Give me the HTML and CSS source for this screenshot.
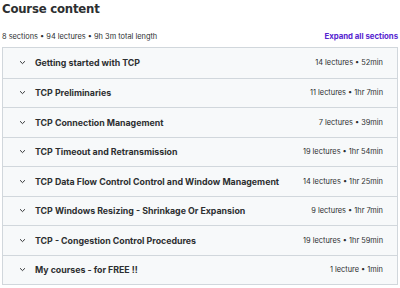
FILE: index.html
```html
<!DOCTYPE html>
<html>
<head>
<meta charset="utf-8">
<link rel="stylesheet" href="styles.css">
</head>
<body>
<div class="page">
  <h2 class="title">Course content</h2>
  <div class="meta">
    <span class="stats">8 sections • 94 lectures • 9h 3m total length</span>
    <span class="expand">Expand all sections</span>
  </div>
  <div class="list">
    <div class="row"><svg class="chev" viewBox="0 0 10 6"><path d="M1.5 1.2 L5 4.6 L8.5 1.2" /></svg><span class="name">Getting started with TCP</span><span class="info">14 lectures • 52min</span></div>
    <div class="row"><svg class="chev" viewBox="0 0 10 6"><path d="M1.5 1.2 L5 4.6 L8.5 1.2" /></svg><span class="name">TCP Preliminaries</span><span class="info">11 lectures • 1hr 7min</span></div>
    <div class="row"><svg class="chev" viewBox="0 0 10 6"><path d="M1.5 1.2 L5 4.6 L8.5 1.2" /></svg><span class="name">TCP Connection Management</span><span class="info">7 lectures • 39min</span></div>
    <div class="row"><svg class="chev" viewBox="0 0 10 6"><path d="M1.5 1.2 L5 4.6 L8.5 1.2" /></svg><span class="name">TCP Timeout and Retransmission</span><span class="info">19 lectures • 1hr 54min</span></div>
    <div class="row"><svg class="chev" viewBox="0 0 10 6"><path d="M1.5 1.2 L5 4.6 L8.5 1.2" /></svg><span class="name">TCP Data Flow Control Control and Window Management</span><span class="info">14 lectures • 1hr 25min</span></div>
    <div class="row"><svg class="chev" viewBox="0 0 10 6"><path d="M1.5 1.2 L5 4.6 L8.5 1.2" /></svg><span class="name">TCP Windows Resizing - Shrinkage Or Expansion</span><span class="info">9 lectures • 1hr 7min</span></div>
    <div class="row"><svg class="chev" viewBox="0 0 10 6"><path d="M1.5 1.2 L5 4.6 L8.5 1.2" /></svg><span class="name">TCP - Congestion Control Procedures</span><span class="info">19 lectures • 1hr 59min</span></div>
    <div class="row"><svg class="chev" viewBox="0 0 10 6"><path d="M1.5 1.2 L5 4.6 L8.5 1.2" /></svg><span class="name">My courses - for FREE !!</span><span class="info">1 lecture • 1min</span></div>
  </div>
</div>
</body>
</html>
```
FILE: styles.css
```css
* { box-sizing: border-box; }
html, body { margin: 0; padding: 0; background: #fff; }
body { font-family: Inter, "Noto Sans", sans-serif; color: #2d2f31; }
.page { padding: 0 2px; width: 400px; }
.title { margin: 0; font-family: "DejaVu Sans", sans-serif; font-stretch: condensed; font-size: 13px; font-weight: 700; line-height: 18px; letter-spacing: -0.2px; padding-top: 0; }
.meta { display: flex; justify-content: space-between; align-items: center; margin-top: 12px; height: 12px; font-size: 7.4px; }
.stats { color: #2d2f31; }
.expand { color: #5624d0; font-weight: 700; font-size: 7.8px; }
.list { margin-top: 5px; border: 1px solid #d1d7dc; }
.row { display: flex; align-items: center; height: 29.5px; background: #f7f9fa; border-top: 1px solid #d1d7dc; padding: 0 14px 0 16px; }
.row:first-child { border-top: none; }
.chev { width: 7px; height: 5px; fill: none; stroke: #2d2f31; stroke-width: 1.4; flex: none; }
.name { margin-left: 9px; font-weight: 700; font-size: 8.8px; flex: 1; white-space: nowrap; }
.info { font-size: 7.4px; color: #2d2f31; white-space: nowrap; }
```
